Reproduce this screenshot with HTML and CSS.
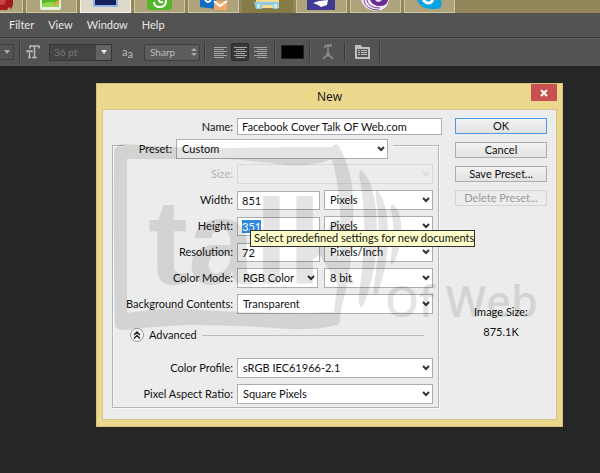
FILE: index.html
```html
<!DOCTYPE html>
<html lang="en">
<head>
<meta charset="utf-8">
<title>New document</title>
<link rel="stylesheet" href="styles.css">
</head>
<body>
<svg class="defs" aria-hidden="true">
  <symbol id="chev" viewBox="0 0 8 6"><path d="M1 1l3 3 3-3" fill="none" stroke="currentColor" stroke-width="2"/></symbol>
</svg>
<nav class="taskbar" aria-label="Taskbar">
  <div class="task first"><svg viewBox="0 0 22 13"><path d="M0 0h13v5l-2 4-2-2-2 3H0z" fill="#a51a1a"/><path d="M0 0h6l-1 4-5 1z" fill="#c44"/></svg></div>
  <div class="task"><svg viewBox="0 0 50 13"><path d="M14 0h21v8q0 2-2 2H16q-2 0-2-2z" fill="#e8efe0"/><path d="M16 0h17v7H16z" fill="#58b82a"/><path d="M16 4q8-4 17 0v3H16z" fill="#8fd94c"/><path d="M27 5l5-5 2 2-5 4z" fill="#e8a63a"/></svg></div>
  <div class="task active"><svg viewBox="0 0 50 13"><path d="M13 0h25v7H13z" fill="#8fb5ea"/><path d="M15 0h21v5H15z" fill="#14205c"/></svg></div>
  <div class="task"><svg viewBox="0 0 50 13"><path d="M13 0h25v7q0 3-3 3H16q-3 0-3-3z" fill="#52b72c"/><path d="M20 2q0 5 6 5 6 0 6-7" fill="none" stroke="#fff" stroke-width="2"/><path d="M25 0q0 3 4 2" fill="none" stroke="#fff" stroke-width="2"/></svg></div>
  <div class="task"><svg viewBox="0 0 50 13"><path d="M12 0h16v9l-16-2z" fill="#0d6fc4"/><path d="M17 0q3 4 6 0" fill="none" stroke="#fff" stroke-width="2"/><path d="M26 1h13v9H26z" fill="#f2a765"/><path d="M26 1l6 5 7-5" fill="none" stroke="#fff" stroke-width="2"/></svg></div>
  <div class="task flat"><svg viewBox="0 0 50 13"><path d="M14 0h23v8H14z" fill="#f2dd8c"/><path d="M12 2h25l-1 7h-5V5H20v4h-6z" fill="#8ccbe8"/><path d="M15 4h3v4h-3zm17 0h3v4h-3z" fill="#c8ebf7"/></svg></div>
  <div class="task"><svg viewBox="0 0 50 13"><path d="M11 0h28v10H11z" fill="#3e3b94"/><path d="M17 3l6-2 9-1-1 5-6 2-3-2z" fill="#fff"/></svg></div>
  <div class="task"><svg viewBox="0 0 50 13"><path d="M11 0h28q-2 11-13 11T11 0z" fill="#efe8f5"/><path d="M20 0h18q-1 6-8 6T20 0z" fill="#6a2c91"/><path d="M17 0q1 8 13 8M14 0q1 10 15 10" fill="none" stroke="#7d47a3"/><path d="M25 0h7q-4 4-7 0z" fill="#efe8f5"/></svg></div>
  <div class="task"><svg viewBox="0 0 50 13"><path d="M13 0h24q3 10-7 9-13 1-17-9z" fill="#0ba3e2"/><path d="M19 0q6 6 10 0" fill="none" stroke="#fff" stroke-width="3"/></svg></div>
</nav>
<nav class="menubar" aria-label="Menu">
  <a href="#">Filter</a><a href="#">View</a><a href="#">Window</a><a href="#">Help</a>
</nav>
<div class="toolbar">
  <button class="stub" aria-label="Font style"><svg width="8" height="6" viewBox="0 0 8 6"><path d="M1 1h6l-3 4z" fill="#aaa"/></svg></button>
  <i class="sep"></i>
  <svg class="tt" width="14" height="14" viewBox="0 0 14 14"><path d="M4 3.500V1h9v2.500M8.500 1v11M6 12.500h5M1 7.500V6h5v1.500M3.500 6v6M2 12.500h3" fill="none" stroke="#bbb" stroke-width="1.500"/></svg>
  <div class="size"><input aria-label="Font size" value="36 pt"><button aria-label="Font sizes"><svg width="6" height="4" viewBox="0 0 6 4"><path d="M0 0h6l-3 4z" fill="#eee"/></svg></button></div>
  <span class="aa">a<span>a</span></span>
  <div class="pick sharp"><select aria-label="Anti-aliasing"><option>Sharp</option></select><svg width="6" height="8" viewBox="0 0 6 8"><path d="M0 3l3-3 3 3zM0 5h6l-3 3z" fill="#aaa"/></svg></div>
  <i class="sep"></i>
  <div class="aligns">
    <button aria-label="Align left"><svg width="13" height="13" viewBox="0 0 13 13"><path d="M0 1.500h13M0 3.500h10M0 5.500h13M0 7.500h10M0 9.500h13M0 11.500h10" stroke="#a5a5a5"/></svg></button>
    <button class="on" aria-label="Align center"><svg width="13" height="13" viewBox="0 0 13 13"><path d="M0 1.500h13M2 3.500h9M0 5.500h13M2 7.500h9M0 9.500h13M2 11.500h9" stroke="#a5a5a5"/></svg></button>
    <button aria-label="Align right"><svg width="13" height="13" viewBox="0 0 13 13"><path d="M0 1.500h13M3 3.500h10M0 5.500h13M3 7.500h10M0 9.500h13M3 11.500h10" stroke="#a5a5a5"/></svg></button>
  </div>
  <i class="sep"></i>
  <button class="swatch" aria-label="Text color"></button>
  <i class="sep"></i>
  <button class="tool" aria-label="Warp text"><svg width="12" height="16" viewBox="0 0 12 16"><path d="M3 4V2q3-1 6-1v2M6 2v8M4 10h4M1 15q5-7 10 0" fill="none" stroke="#909090" stroke-width="1.500"/></svg></button>
  <i class="sep"></i>
  <button class="tool" aria-label="Panels"><svg width="15" height="14" viewBox="0 0 15 14"><path d="M0 0h6l1 2h8v12H0z" fill="#c0c0c0"/><path d="M2 4h11v8H2z" fill="#555"/><path d="M3 5.500h2M6 5.500h6M3 7.500h2M6 7.500h6M3 9.500h2M6 9.500h6" stroke="#c0c0c0"/></svg></button>
  <i class="sep"></i>
</div>
<main class="workspace">
  <form class="dialog" aria-label="New">
    <header><h1>New</h1><button type="button" class="close" aria-label="Close"><svg width="8" height="8" viewBox="0 0 8 8"><path d="M1 1l6 6M7 1l-6 6" stroke="#fff" stroke-width="2"/></svg></button></header>
    <div class="content">
      <div class="settings">
        <div class="row name"><label for="name">Name:</label><input id="name" value="Facebook Cover Talk OF Web.com"></div>
        <div class="group">
          <div class="preset"><label for="preset">Preset:</label><div class="pick"><select id="preset"><option>Custom</option></select><svg><use href="#chev"/></svg></div></div>
          <div class="rows">
            <div class="row off"><label for="size">Size:</label><div class="pick wide"><select id="size" disabled><option></option></select><svg><use href="#chev"/></svg></div></div>
            <div class="row"><label for="w">Width:</label><input id="w" value="851"><div class="pick"><select aria-label="Width unit"><option>Pixels</option></select><svg><use href="#chev"/></svg></div></div>
            <div class="row tipped"><label for="h">Height:</label><input id="h" class="selected" value="351"><div class="pick"><select aria-label="Height unit"><option>Pixels</option></select><svg><use href="#chev"/></svg></div>
              <div class="tip" role="tooltip">Select predefined settings for new documents</div></div>
            <div class="row"><label for="r">Resolution:</label><input id="r" value="72"><div class="pick"><select aria-label="Resolution unit"><option>Pixels/Inch</option></select><svg><use href="#chev"/></svg></div></div>
            <div class="row"><label for="mode">Color Mode:</label><div class="pick mode"><select id="mode"><option>RGB Color</option></select><svg><use href="#chev"/></svg></div><div class="pick"><select aria-label="Bit depth"><option>8 bit</option></select><svg><use href="#chev"/></svg></div></div>
            <div class="row"><label for="bg">Background Contents:</label><div class="pick wide"><select id="bg"><option>Transparent</option></select><svg><use href="#chev"/></svg></div></div>
          </div>
          <div class="advanced"><button type="button" aria-label="Collapse advanced"><svg width="8" height="8" viewBox="0 0 8 8"><path d="M1 4l3-3 3 3M1 7.500l3-3 3 3" fill="none" stroke="#222" stroke-width="1.500"/></svg></button><span>Advanced</span><hr></div>
          <div class="rows">
            <div class="row"><label for="cp">Color Profile:</label><div class="pick wide"><select id="cp"><option>sRGB IEC61966-2.1</option></select><svg><use href="#chev"/></svg></div></div>
            <div class="row"><label for="par">Pixel Aspect Ratio:</label><div class="pick wide"><select id="par"><option>Square Pixels</option></select><svg><use href="#chev"/></svg></div></div>
          </div>
        </div>
      </div>
      <aside>
        <button type="button" class="ok">OK</button>
        <button type="button">Cancel</button>
        <button type="button">Save Preset...</button>
        <button type="button" disabled>Delete Preset...</button>
        <p>Image Size:</p><p>875.1K</p>
      </aside>
    </div>
    <svg class="mark" width="467" height="344" viewBox="96 83 467 344">
      <g opacity=".1">
        <path fill-rule="evenodd" d="M114 151q1-6 10-7 60 5 110 4t97-1l5-3 3 2q17 30 14 77-1 50-12 86-1 11-2 15-15 6-50 5-50-4-100-4-30 1-66 5-7 0-8-5-2-90-1-174zM127 159V313q25-4 50-5 50 5 130 5l27-1q6-40 7-80-1-45-9-73-20 8-45 6-30-4-60-6z"/>
        <path d="M361 170C373 180 377 205 377 232 377 262 370 290 363 306Q358 309 359 295C363 262 368 225 360 180Q358 172 361 170zM377 190C385 198 388 215 388 235 388 260 382 283 377 294Q373 297 374 286C378 260 381 225 376 198Q375 191 377 190zM393 204C400 210 402 222 401 235 400 250 396 260 392 265Q390 265 391 257C393 240 395 225 391 211Q390 205 393 204z"/>
        <text class="talk" x="148" y="284">talk</text>
        <text class="web" x="385" y="317">Of Web</text>
      </g>
    </svg>
  </form>
</main>
</body>
</html>
```
FILE: styles.css
```css
* { box-sizing: border-box; }
body { margin: 0; min-height: 100vh; display: flex; flex-direction: column; background: #262626; font: 11px/14px Lato, "Liberation Sans", sans-serif; color: #111; }
input, select, button { font: inherit; color: inherit; margin: 0; padding: 0; border: 0; border-radius: 0; background: none; min-width: 0; }
select { appearance: none; }
.defs { position: absolute; width: 0; height: 0; }

.taskbar { display: flex; gap: 3px; height: 13px; overflow: hidden; background: #92865a; }
.task { flex: 0 0 50px; height: 13px; background: #aea37b; border: 1px solid #cfc7a4; border-top: 0; }
.task svg { display: block; width: 50px; height: 13px; margin-left: -1px; }
.task.first { flex-basis: 23px; border-left: 0; }
.task.first svg { width: 22px; margin: 0; }
.task.active { background: #dedac9; border-color: #f6f4ea; }
.task.flat { background: #877b45; border-color: #877b45; }

.menubar { display: flex; gap: 14px; align-items: center; height: 24px; padding-left: 9px; background: #535353; }
.menubar a { color: #e8e8e8; text-decoration: none; }

.toolbar { display: flex; align-items: center; height: 29px; background: #535353; border-top: 1px solid #383838; box-shadow: inset 0 1px #606060; }
.toolbar button { display: flex; align-items: center; justify-content: center; }
.sep { width: 2px; height: 20px; border-left: 1px solid #3a3a3a; border-right: 1px solid #606060; }
.stub { width: 14px; height: 16px; margin-right: 5px; border: 1px solid #3e3e3e; border-left: 0; }
.tt { margin: 0 9px 0 5px; }
.size { display: flex; width: 63px; height: 17px; border: 1px solid #353535; background: #444; }
.size input { flex: 1; width: 0; padding-left: 4px; color: #777; font-size: 10px; }
.size button { width: 15px; background: #636363; }
.aa { margin: 0 10px; width: 12px; color: #bbb; line-height: 12px; white-space: nowrap; }
.aa span { position: relative; top: 2px; }
.pick { display: grid; align-items: center; flex: 1; min-width: 0; }
.pick.sharp { flex: 0 0 56px; color: #bbb; }
.pick.sharp select { height: 17px; border: 1px solid #3e3e3e; border-radius: 2px; background: #5c5c5c; padding-left: 5px; font-size: 10px; }
.sharp + .sep { margin-left: 4px; }
.aligns { display: flex; margin: 0 5px; gap: 2px; }
.toolbar .aligns button { width: 18px; height: 18px; }
.toolbar .aligns .on { background: #383838; border: 1px solid #2b2b2b; border-radius: 2px; }
.swatch { width: 23px; height: 14px; margin: 0 5px; }
.toolbar .swatch { background: #000; border: 1px solid #222; }
.tool { width: 15px; margin: 0 9px; }

.workspace { flex: 1; padding: 17px 37px 46px 96px; }
.dialog { position: relative; background: #ebd88d; border: 1px solid #d5c27a; padding: 0 5px 6px; }
header { display: flex; height: 25px; align-items: center; position: relative; }
h1 { flex: 1; margin: 0; font: 400 12px/16px "Open Sans", sans-serif; text-align: center; }
.close { position: absolute; right: 0; top: 0; width: 26px; height: 17px; display: grid; place-items: center; }
header .close { background: #c75050; }
.content { display: flex; gap: 13px; padding: 8px 9px 11px 9px; background: #ececec; border: 1px solid #d3c68d; }
.settings { flex: 1; min-width: 0; }
.row { display: flex; align-items: center; gap: 4px; position: relative; height: 20px; }
.row label { width: 120px; flex: none; text-align: right; white-space: nowrap; }
.row input, .pick select { background: #fff; border: 1px solid #abadb3; padding-left: 4px; }
.row input { width: 83px; height: 19px; }
.row.name { height: 17px; margin-bottom: 10px; }
.row.name label { width: 121px; }
.row.name input { flex: 1; height: 17px; }
.pick select, .pick svg { grid-area: 1 / 1; }
.pick select { width: 100%; height: 20px; padding-left: 5px; }
.pick svg { width: 8px; height: 6px; justify-self: end; margin-right: 3px; color: #333; pointer-events: none; }
.pick.sharp svg { width: 6px; height: 8px; color: #aaa; }
.pick.mode { flex: 0 0 81px; margin-right: 2px; }
.group { margin-right: 3px; padding: 0 5px 3px 0; border: 1px solid #b5b5b8; box-shadow: inset 1px 1px #f8f8f8, 1px 1px #f8f8f8; }
.preset { display: flex; align-items: center; gap: 4px; margin: -7px 40px 5px 11px; padding-right: 5px; background: #ececec; }
.preset label { width: 48px; flex: none; text-align: right; }
.rows { display: grid; gap: 6px; }
.off { color: #b4b4b4; }
.off .pick select { background: #ececec; border-color: #d2d2d2; }
.off .pick svg { color: #b4b4b4; }
.row .selected { color: #fff; background: linear-gradient(#3088de, #3088de) 4px 2px / 19px 13px no-repeat #fff; }
.tip { position: absolute; z-index: 2; left: 137px; top: 14px; width: 225px; height: 17px; padding-left: 3px; background: #ffffcb; border: 1px solid #303030; white-space: nowrap; }
.advanced { display: flex; align-items: center; gap: 5px; margin: 14px 9px 16px 17px; height: 14px; }
.advanced button { width: 14px; height: 14px; border: 1px solid #999; border-radius: 50%; background: #f7f7f7; display: grid; place-items: center; }
.advanced hr { flex: 1; margin: 0; border: 0; border-top: 1px solid #bcbcbc; }
aside { flex: 0 0 92px; display: flex; flex-direction: column; gap: 8px; text-align: center; }
aside button { height: 16px; line-height: 14px; border: 1px solid #acacac; background: linear-gradient(#f2f2f2, #e2e2e2); }
aside .ok { border-color: #4a9af0; }
aside button:disabled { color: #999; border-color: #d4d4d4; background: #ececec; }
aside p { margin: 0; line-height: 12px; }
aside button + p { margin-top: 92px; }
.mark { position: absolute; left: -1px; top: -1px; pointer-events: none; }
.talk { font: bold 120px "Liberation Sans Narrow", "Liberation Sans", sans-serif; }
.web { font: 600 43px "Open Sans", sans-serif; }
```
